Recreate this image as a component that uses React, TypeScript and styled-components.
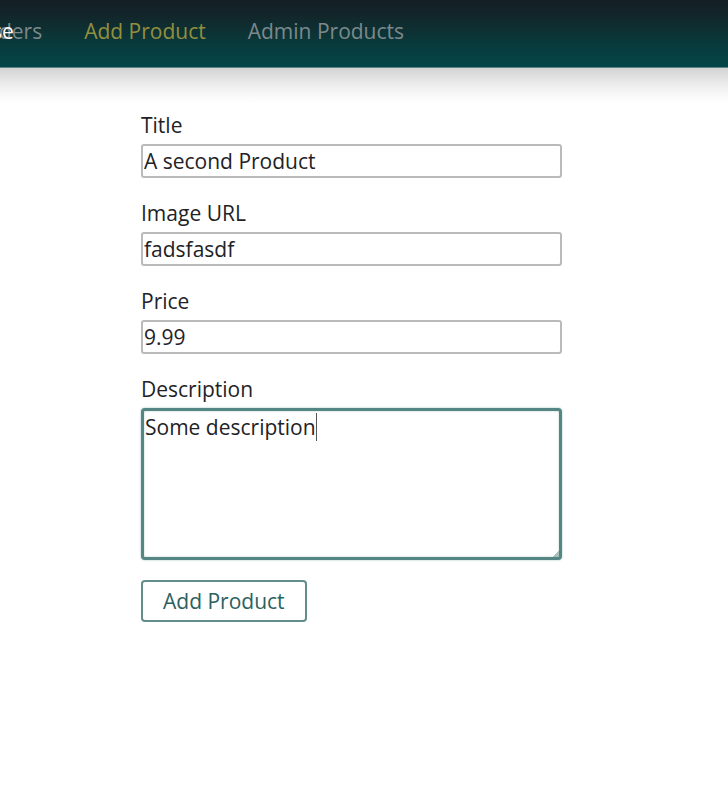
import React from 'react';
import styled, { createGlobalStyle } from 'styled-components';

const GlobalStyle = createGlobalStyle`
  *, *::before, *::after { box-sizing: border-box; }
  body {
    margin: 0;
    background: #fff;
    color: #222226;
    font-family: "Open Sans", "Noto Sans", sans-serif;
    font-size: 21px;
    line-height: 31px;
  }
`;

const Header = styled.header`
  position: relative;
  display: flex;
  height: 68px;
  overflow: hidden;
  border-bottom: 1px solid #5d8587;
  background: linear-gradient(#141e25 0%, #12272b 25%, #083c3e 70%, #044648 100%);
`;

const HeaderShadow = styled.div`
  height: 36px;
  background: linear-gradient(#d3d3d3, #ececec 45%, #fcfcfc 85%, #fff);
`;

const Nav = styled.nav`
  display: flex;
  gap: 42px;
  padding-top: 16px;
  margin-left: -26px;
  white-space: nowrap;
`;

const NavLink = styled.a<{ $active?: boolean }>`
  color: ${({ $active }) => ($active ? '#938f3e' : '#7c898c')};
  text-decoration: none;
`;

const PageCaption = styled.span`
  position: absolute;
  top: 16px;
  left: -8px;
  color: #fff;
`;

const Form = styled.form`
  display: flex;
  flex-direction: column;
  align-items: flex-start;
  gap: 20px;
  padding: 6px 166px 48px 141px;
`;

const Field = styled.div`
  display: flex;
  flex-direction: column;
  gap: 3px;
  width: 100%;
`;

const TextInput = styled.input`
  width: 100%;
  height: 34px;
  padding: 1px;
  border: 2px solid #bababa;
  border-radius: 3px;
  background: #fff;
  color: inherit;
  font: inherit;
  outline: none;
`;

const AreaWrap = styled.div`
  position: relative;
  display: flex;
`;

const TextArea = styled.textarea`
  width: 100%;
  height: 152px;
  padding: 1px;
  border: 3px solid #568683;
  border-radius: 4px;
  box-shadow: 0 0 2px #8fb9b6, inset 0 0 2px #a9cbc9;
  background: #fff;
  color: inherit;
  font: inherit;
  outline: none;
  resize: none;
  caret-color: transparent;
`;

const Caret = styled.span`
  position: absolute;
  top: 5px;
  left: 175px;
  width: 1px;
  height: 28px;
  background: #55555a;
`;

const Grip = styled.span`
  position: absolute;
  right: 3px;
  bottom: 3px;
  width: 6px;
  height: 6px;
  background: linear-gradient(135deg, transparent 50%, #a9bfbd 50%);
`;

const SubmitButton = styled.button`
  height: 42px;
  padding: 0 20px;
  border: 2px solid #628d8b;
  border-radius: 4px;
  background: #fff;
  color: #2c6160;
  font: inherit;
  cursor: pointer;
`;

const fields = [
  { id: 'title', label: 'Title', value: 'A second Product' },
  { id: 'imageUrl', label: 'Image URL', value: 'fadsfasdf' },
  { id: 'price', label: 'Price', value: '9.99' },
];

export default function App() {
  return (
    <>
      <GlobalStyle />
      <Header>
        <Nav>
          <NavLink href="#orders">Orders</NavLink>
          <NavLink href="#add-product" $active>Add Product</NavLink>
          <NavLink href="#admin-products">Admin Products</NavLink>
        </Nav>
        <PageCaption>se</PageCaption>
      </Header>
      <HeaderShadow />
      <main>
        <Form onSubmit={(event) => event.preventDefault()}>
          {fields.map(({ id, label, value }) => (
            <Field key={id}>
              <label htmlFor={id}>{label}</label>
              <TextInput id={id} name={id} type="text" defaultValue={value} />
            </Field>
          ))}
          <Field>
            <label htmlFor="description">Description</label>
            <AreaWrap>
              <TextArea id="description" name="description" defaultValue="Some description" />
              <Caret aria-hidden="true" />
              <Grip aria-hidden="true" />
            </AreaWrap>
          </Field>
          <SubmitButton type="submit">Add Product</SubmitButton>
        </Form>
      </main>
    </>
  );
}
